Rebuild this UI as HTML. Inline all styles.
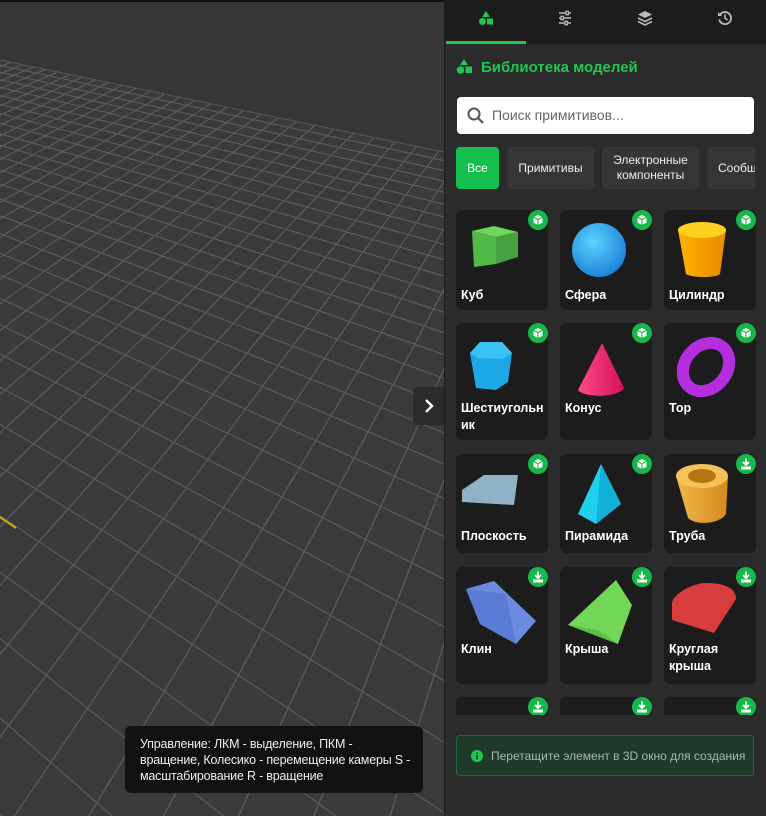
<!DOCTYPE html>
<html><head><meta charset="utf-8"><style>
*{box-sizing:border-box;margin:0;padding:0}
html,body{width:766px;height:816px;overflow:hidden}
body{background:#3a3a3a;font-family:"Liberation Sans","DejaVu Sans",sans-serif;position:relative}
#vp{position:absolute;left:0;top:0;width:444px;height:816px;overflow:hidden;background:#363636}
#gsv{position:absolute;left:0;top:0}
#tip{position:absolute;left:125px;top:726px;width:298px;height:67px;background:rgba(14,14,14,.93);border-radius:6px;color:#eee;font-size:12.5px;line-height:16px;padding:10px 0 0 15px;white-space:nowrap;letter-spacing:-0.2px}
#tog{position:absolute;left:413px;top:387px;width:31px;height:38px;background:#2b2b2b;border-radius:3px 0 0 3px}
#panel{position:absolute;left:444px;top:0;width:322px;height:816px;background:#2b2b2b;border-left:1px solid #1e1e1e;overflow:hidden}
#tabs{height:44px;background:#1c1c1c;position:relative}
#tabs svg{position:absolute;top:10px}
#ul{position:absolute;left:1px;top:41px;width:80px;height:3px;background:#1fc752}
h1{position:absolute;left:36px;top:59px;font-size:15px;color:#1fc752;font-weight:bold}
#search{position:absolute;left:12px;top:97px;width:297px;height:37px;background:#fff;border-radius:4px;font-size:14px;color:#666;padding:10px 0 0 35px}
.chip{position:absolute;top:147px;height:42px;border-radius:4px;background:#353535;color:#eee;font-size:12px;text-align:center;display:flex;align-items:center;justify-content:center;line-height:15px}
#grid{position:absolute;left:11px;top:210px;width:300px;height:505px;overflow:hidden}
.card{position:absolute;width:92px;background:#1c1c1c;border-radius:6px}
.card .n{position:absolute;left:5px;font-size:12.5px;font-weight:bold;color:#fff;line-height:17px}
.card .b{position:absolute;right:0;top:0;width:20px;height:20px}
.card svg.s{position:absolute;left:0;top:0}
#info{position:absolute;left:11px;top:735px;width:298px;height:41px;border:1px solid #1d6a36;background:#1f3a2a;border-radius:4px;color:#a9b7ad;font-size:12px;padding:13px 0 0 34px}
</style></head><body>
<svg width="0" height="0" style="position:absolute;top:0;left:0"><defs>
<symbol id="bc" viewBox="0 0 20 20"><circle cx="10" cy="10" r="10" fill="#16b84a"/><path d="M10 5l4.5 2.3v5.4L10 15l-4.5-2.3V7.3z" fill="#fff"/><path d="M5.5 7.3L10 9.6l4.5-2.3M10 9.6V15" stroke="#16b84a" stroke-width="1.1" fill="none"/></symbol>
<symbol id="bd" viewBox="0 0 20 20"><circle cx="10" cy="10" r="10" fill="#16b84a"/><path d="M10 4.5v6M7 8l3 3 3-3" stroke="#fff" stroke-width="1.8" fill="none"/><rect x="5" y="12.5" width="10" height="3" fill="#fff"/></symbol>
<radialGradient id="sph" cx=".4" cy=".35" r=".7"><stop offset="0" stop-color="#5ad3ff"/><stop offset="1" stop-color="#1a7fd6"/></radialGradient>
<linearGradient id="cyl" x1="0" x2="1"><stop offset="0" stop-color="#ffb300"/><stop offset="1" stop-color="#e68a00"/></linearGradient>
<linearGradient id="pk" x1="0" x2="1"><stop offset="0" stop-color="#ff4a8a"/><stop offset="1" stop-color="#d4115a"/></linearGradient>
<linearGradient id="tb" x1="0" x2="1"><stop offset="0" stop-color="#f2b84a"/><stop offset="1" stop-color="#d48a1e"/></linearGradient>
<clipPath id="gc"><polygon points="0,60 444,152 444,816 0,816"/></clipPath>
</defs></svg>
<div id="vp"><svg id="gsv" width="444" height="816"><polygon points="0,60 444,152 444,816 0,816" fill="#3a3a3a"/><g id="gl" stroke="#5d5d5d" stroke-width="1.1" fill="none" clip-path="url(#gc)"></g><path d="M0 60L444 152" stroke="#555" stroke-width="1"/><rect width="444" height="2" fill="#111"/></svg>
<div style="position:absolute;left:0;top:516px;width:20px;height:1.5px;background:#d9a21b;transform:rotate(34deg);transform-origin:0 0"></div>
<div id="tip">Управление: ЛКМ - выделение, ПКМ -<br>вращение, Колесико - перемещение камеры S -<br>масштабирование R - вращение</div>
<div id="tog"><svg width="31" height="38"><path d="M13 13l6 6-6 6" stroke="#fff" stroke-width="2.4" fill="none"/></svg></div>
</div>
<script>
(function(){
var VA=[-990,-147],VB=[712,-214],O=[150,616],a=0.036,b=0.05;
function P(u,v){var w=a*u+b*v+1;return [(a*u*VA[0]+b*v*VB[0]+O[0])/w,(a*u*VA[1]+b*v*VB[1]+O[1])/w];}
var s='';
for(var k=-80;k<=200;k++){
 var v0=(-(1+a*k)+0.02)/b, p1=P(k,v0), p2=P(k,50000);
 s+='M'+p1[0].toFixed(1)+' '+p1[1].toFixed(1)+'L'+p2[0].toFixed(1)+' '+p2[1].toFixed(1);
 var u0=(-(1+b*k)+0.02)/a, q1=P(u0,k), q2=P(50000,k);
 s+='M'+q1[0].toFixed(1)+' '+q1[1].toFixed(1)+'L'+q2[0].toFixed(1)+' '+q2[1].toFixed(1);
}
var p=document.createElementNS('http://www.w3.org/2000/svg','path');p.setAttribute('d',s);
document.getElementById('gl').appendChild(p);
})();
</script>
<div id="panel">
<div id="tabs">
<svg style="left:33px" width="16" height="16"><path d="M8 1l4 6H4z" fill="#1fc752"/><circle cx="4.5" cy="11.5" r="3.5" fill="#1fc752"/><rect x="9" y="8.5" width="6" height="6" fill="#1fc752"/></svg>
<svg style="left:112px" width="16" height="16"><g stroke="#bbb" stroke-width="1.5"><path d="M2 3h12M2 8h12M2 13h12"/></g><g fill="#1c1c1c" stroke="#bbb" stroke-width="1.3"><rect x="9" y="1.3" width="2.4" height="3.4"/><rect x="4" y="6.3" width="2.4" height="3.4"/><rect x="8" y="11.3" width="2.4" height="3.4"/></g></svg>
<svg style="left:192px" width="16" height="16"><path d="M8 1l7 3.5-7 3.5-7-3.5z" fill="#bbb"/><path d="M1 8l7 3.5L15 8M1 11.5L8 15l7-3.5" stroke="#bbb" stroke-width="1.6" fill="none"/></svg>
<svg style="left:272px" width="16" height="16"><path d="M3.2 4.5A6 6 0 1 1 2.2 9.5" stroke="#bbb" stroke-width="1.8" fill="none"/><path d="M1 2v4h4z" fill="#bbb"/><path d="M8 4.5V8l2.5 2" stroke="#bbb" stroke-width="1.6" fill="none"/></svg>
<div id="ul"></div></div>
<svg style="position:absolute;left:11px;top:58px" width="17" height="17"><path d="M8 1l4 6H4z" fill="#1fc752"/><circle cx="4.5" cy="12" r="3.7" fill="#1fc752"/><rect x="9.5" y="8.5" width="6.5" height="6.5" fill="#1fc752"/></svg>
<h1>Библиотека моделей</h1>
<div id="search"><svg style="position:absolute;left:10px;top:10px" width="18" height="18"><circle cx="7" cy="7" r="5.5" stroke="#555" stroke-width="2" fill="none"/><path d="M11 11l5 5" stroke="#555" stroke-width="2.2"/></svg>Поиск примитивов...</div>
<div class="chip" style="left:11px;width:43px;background:#14c14e;color:#fff">Все</div>
<div class="chip" style="left:62px;width:87px">Примитивы</div>
<div class="chip" style="left:157px;width:97px">Электронные<br>компоненты</div>
<div class="chip" style="left:262px;width:48px;justify-content:flex-start;padding-left:11px;overflow:hidden;border-radius:4px 0 0 4px">Сообщ</div>
<div id="grid">
<div class="card" style="left:0;top:0;height:100px"><svg class="s" width="92" height="100"><path d="M16 21l22-5 24 6-22 5z" fill="#6fd65a"/><path d="M16 21l24 6v27l-22 3z" fill="#52b848"/><path d="M40 27l22-5v25l-22 7z" fill="#46a23e"/></svg><svg class="b"><use href="#bc"/></svg><div class="n" style="top:77px">Куб</div></div>
<div class="card" style="left:104px;top:0;height:100px"><svg class="s" width="92" height="100"><circle cx="39" cy="40" r="27" fill="url(#sph)"/></svg><svg class="b"><use href="#bc"/></svg><div class="n" style="top:77px">Сфера</div></div>
<div class="card" style="left:208px;top:0;height:100px"><svg class="s" width="92" height="100"><path d="M14 20h48l-6 44c-4 4-28 4-34 0z" fill="url(#cyl)"/><ellipse cx="38" cy="20" rx="24" ry="8" fill="#ffd21f"/></svg><svg class="b"><use href="#bc"/></svg><div class="n" style="top:77px">Цилиндр</div></div>
<div class="card" style="left:0;top:113px;height:117px"><svg class="s" width="92" height="117"><path d="M14 30l10-11h22l10 11-4 29-12 8-20-2z" fill="#1ea7e6"/><path d="M14 30l10-11h22l10 11-10 6-24-1z" fill="#3cc2f5"/></svg><svg class="b"><use href="#bc"/></svg><div class="n" style="top:77px">Шестиугольн<br>ик</div></div>
<div class="card" style="left:104px;top:113px;height:117px"><svg class="s" width="92" height="117"><path d="M42 20L18 67c6 8 40 8 46-2z" fill="url(#pk)"/></svg><svg class="b"><use href="#bc"/></svg><div class="n" style="top:77px">Конус</div></div>
<div class="card" style="left:208px;top:113px;height:117px"><svg class="s" width="92" height="117"><ellipse cx="42" cy="44" rx="21" ry="26" transform="rotate(40 42 44)" fill="none" stroke="#b42ee0" stroke-width="12"/></svg><svg class="b"><use href="#bc"/></svg><div class="n" style="top:77px">Тор</div></div>
<div class="card" style="left:0;top:244px;height:99px"><svg class="s" width="92" height="99"><path d="M6 36l22-15h34l-4 30-52-3z" fill="#8fb2c7"/></svg><svg class="b"><use href="#bc"/></svg><div class="n" style="top:74px">Плоскость</div></div>
<div class="card" style="left:104px;top:244px;height:99px"><svg class="s" width="92" height="99"><path d="M41 10L18 60l18 10 25-20z" fill="#1fd0ee"/><path d="M41 10l20 40-25 20z" fill="#12b0d4"/></svg><svg class="b"><use href="#bc"/></svg><div class="n" style="top:74px">Пирамида</div></div>
<div class="card" style="left:208px;top:244px;height:99px"><svg class="s" width="92" height="99"><path d="M12 22h52l-2 38c-6 10-30 12-38 4z" fill="url(#tb)"/><ellipse cx="38" cy="22" rx="26" ry="12" fill="#f5c25a"/><ellipse cx="38" cy="22" rx="14" ry="7" fill="#b77414"/></svg><svg class="b"><use href="#bd"/></svg><div class="n" style="top:74px">Труба</div></div>
<div class="card" style="left:0;top:357px;height:117px"><svg class="s" width="92" height="117"><path d="M10 22l28-8 42 40-20 23-36-20z" fill="#6a8be0"/><path d="M10 22l14 35 36 20-10-50z" fill="#5a7bd6"/></svg><svg class="b"><use href="#bd"/></svg><div class="n" style="top:74px">Клин</div></div>
<div class="card" style="left:104px;top:357px;height:117px"><svg class="s" width="92" height="117"><path d="M56 13l16 25-14 39L8 58z" fill="#72d656"/><path d="M8 58l30 5 20 14z" fill="#5cbf45"/></svg><svg class="b"><use href="#bd"/></svg><div class="n" style="top:74px">Крыша</div></div>
<div class="card" style="left:208px;top:357px;height:117px"><svg class="s" width="92" height="117"><path d="M8 36c0-8 20-20 34-20 20 0 30 6 30 16l-22 34-42-13z" fill="#d93c3c"/></svg><svg class="b"><use href="#bd"/></svg><div class="n" style="top:74px">Круглая<br>крыша</div></div>
<div class="card" style="left:0;top:487px;height:40px"><svg class="b"><use href="#bd"/></svg></div>
<div class="card" style="left:104px;top:487px;height:40px"><svg class="b"><use href="#bd"/></svg></div>
<div class="card" style="left:208px;top:487px;height:40px"><svg class="b"><use href="#bd"/></svg></div>
</div>
<div id="info"><svg style="position:absolute;left:14px;top:14px" width="12" height="12"><circle cx="6" cy="6" r="6" fill="#1fc752"/><rect x="5.2" y="5" width="1.6" height="4.5" fill="#1f3a2a"/><rect x="5.2" y="2.5" width="1.6" height="1.6" fill="#1f3a2a"/></svg>Перетащите элемент в 3D окно для создания</div>
</div>
</body></html>
